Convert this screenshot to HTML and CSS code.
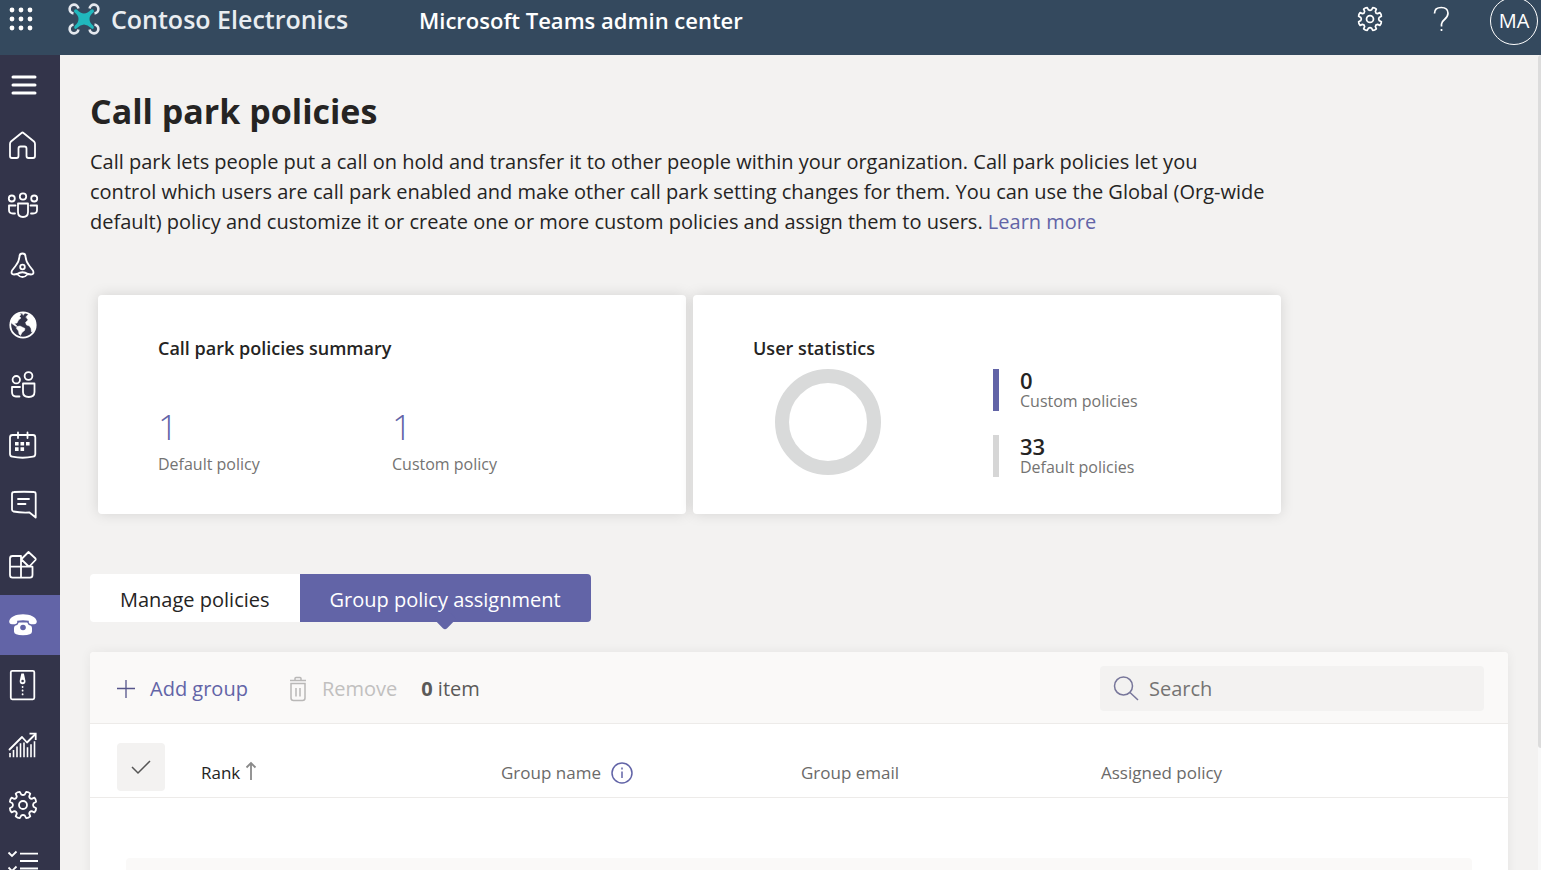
FILE: index.html
```html
<!DOCTYPE html>
<html lang="en">
<head>
<meta charset="utf-8">
<meta name="viewport" content="width=device-width, initial-scale=1">
<title>Call park policies - Microsoft Teams admin center</title>
<link rel="stylesheet" href="styles.css">
</head>
<body>
<svg class="defs" aria-hidden="true">
  <symbol id="gear" viewBox="-15 -15 30 30">
    <path d="M10.6 1.8 13.1 3.2Q13.2 5.4 11.4 7.3L8.7 6.2Q6.4 6.4 6.2 8.7L7.3 11.4Q5.4 13.2 3.2 13.1L1.8 10.6Q0 9.4-1.8 10.6L-3.2 13.1Q-5.4 13.2-7.3 11.4L-6.2 8.7Q-6.4 6.4-8.7 6.2L-11.4 7.3Q-13.2 5.4-13.1 3.2L-10.6 1.8Q-9.4 0-10.6-1.8L-13.1-3.2Q-13.2-5.4-11.4-7.3L-8.7-6.2Q-6.4-6.4-6.2-8.7L-7.3-11.4Q-5.4-13.2-3.2-13.1L-1.8-10.6Q0-9.4 1.8-10.6L3.2-13.1Q5.4-13.2 7.3-11.4L6.2-8.7Q6.4-6.4 8.7-6.2L11.4-7.3Q13.2-5.4 13.1-3.2L10.6-1.8Q9.4 0 10.6 1.8Z"/>
    <circle r="4"/>
  </symbol>
</svg>
<div class="app">
  <header class="topbar">
    <button class="launcher" aria-label="App launcher">
      <svg width="26" height="24" viewBox="-1 0 26 24" fill="#fff"><circle cx="3" cy="3" r="2.4"/><circle cx="12" cy="3" r="2.4"/><circle cx="21" cy="3" r="2.4"/><circle cx="3" cy="12" r="2.4"/><circle cx="12" cy="12" r="2.4"/><circle cx="21" cy="12" r="2.4"/><circle cx="3" cy="21" r="2.4"/><circle cx="12" cy="21" r="2.4"/><circle cx="21" cy="21" r="2.4"/></svg>
    </button>
    <a class="brand" href="#">
      <svg width="32" height="32" viewBox="0 0 32 32" fill="none">
        <path d="M5.5 10.4A4.4 4.4 0 1 1 10.4 5.5M21.6 5.5A4.4 4.4 0 1 1 26.500 10.4M26.500 21.6A4.4 4.4 0 1 1 21.6 26.500M10.4 26.500A4.4 4.4 0 1 1 5.5 21.6" stroke="#e4e8ee" stroke-width="2.6"/>
        <path d="M6 8Q6.500 5.500 8.800 6.500Q12.500 10.500 16 10.500Q19.500 10.500 23.200 6.500Q25.500 5.500 26 8Q26 9 25 9.800Q21.500 12.500 21.500 16Q21.500 19.500 25 22.500Q26.500 24 25.500 25.500Q24.500 26.500 23 25Q19.500 21.500 16 21.500Q12.500 21.500 9 25Q7.500 26.500 6.500 25.500Q5.500 24 7 22.500Q10.500 19.500 10.500 16Q10.500 12.500 7 9.800Q6 9 6 8Z" fill="#20b8bd"/>
      </svg>
      <span>Contoso Electronics</span>
    </a>
    <span class="product">Microsoft Teams admin center</span>
    <div class="top-actions">
      <button aria-label="Settings"><svg class="top-gear" width="26" height="26"><use href="#gear"/></svg></button>
      <button aria-label="Help"><svg width="17" height="26" viewBox="0 0 17 26" fill="none" stroke="#fff" stroke-width="1.7"><path d="M1.500 7.500Q1.500 1.500 8.300 1.500Q15 1.500 15 7.300Q15 10.500 11.500 13.500Q8.500 16 8.500 18V20.500M8.500 23V25"/></svg></button>
      <button class="avatar">MA</button>
    </div>
  </header>
  <div class="body">
    <nav class="rail" aria-label="Main">
      <a class="menu" href="#" aria-label="Menu"><svg viewBox="0 0 60 60"><path d="M13 22H35M13 30H35M13 38H35"/></svg></a>
      <a href="#" aria-label="Home"><svg viewBox="0 0 60 60"><path d="M21.500 18Q22.500 17 23.500 18L34 26.500Q35 27.500 35 29V41Q35 43 33 43H28.500Q26.500 43 26.500 41V33.500Q26.500 31.500 24.500 31.500H20.500Q18.500 31.500 18.500 33.500V41Q18.500 43 16.500 43H12Q10 43 10 41V29Q10 27.500 11 26.500Z"/></svg></a>
      <a href="#" aria-label="Teams"><svg viewBox="0 0 60 60"><circle cx="23" cy="21.500" r="3.200"/><circle cx="11.800" cy="23.500" r="3"/><circle cx="34.200" cy="23.500" r="3"/><path d="M18 28.500H28V37Q28 42 23 42Q18 42 18 37ZM15.500 30.500H9V35Q9 38.500 13 38.500H15M30.500 30.500H37V35Q37 38.500 33 38.500H31"/></svg></a>
      <a href="#" aria-label="Devices"><svg viewBox="0 0 60 60"><path d="M19.500 21.500Q19.500 18.500 22.500 18.500Q25.500 18.500 25.500 21.500Q26 27 29.500 31L33 35.500Q34.500 39.500 31 39.500L28 39Q22.500 35.500 17 39L14 39.500Q10.500 39.500 12 35.500L15.500 31Q19 27 19.500 21.500ZM17 39Q22.500 45 28 39"/><circle cx="22.500" cy="32" r="2.300"/></svg></a>
      <a href="#" aria-label="Locations"><svg viewBox="0 0 60 60"><circle cx="23" cy="30" r="12.700"/><path class="fill" d="M10.500 27L12 23 15 19.500 19 18 21 19.500 19.500 21.500 21 23 18.500 25 17 28 14.500 28.500 17 31 16 31.500 12.500 29ZM17 31.500L20 31 25 33.500 24.500 35.500 22 37.500 20.500 40.500 19 39 18.500 36 16.500 33.500ZM26 22L28.500 19 32 20.500 35 25.500 35.500 31 33.500 36.500 31.500 37 31 33.500 29.500 31 26.500 30 25.500 27.500 28 25ZM21.500 17.500H25L23.500 20Z"/></svg></a>
      <a href="#" aria-label="Users"><svg viewBox="0 0 60 60"><circle cx="28.500" cy="21" r="3.900"/><circle cx="16.300" cy="24.700" r="3.700"/><path d="M23 28.500H34.500V37Q34.500 42 28.800 42Q23 42 23 37ZM20 32H12V37Q12 41.500 16 41.500H19.500"/></svg></a>
      <a href="#" aria-label="Meetings"><svg viewBox="0 0 60 60"><path d="M12.500 20H33Q35.300 20 35.300 22.500V39Q35.300 41.300 33 41.700Q22.500 43.800 12.300 41.700Q10 41.300 10 39V22.500Q10 20 12.500 20ZM18 17.500V23M27.500 17.500V23"/><path class="block" d="M15 27h3.600v3.600H15zM20.500 27h3.600v3.600h-3.600zM26 27h3.600v3.600H26zM15 32.300h3.600v3.600H15zM20.500 32.300h3.600v3.600h-3.600z"/></svg></a>
      <a href="#" aria-label="Messaging policies"><svg viewBox="0 0 60 60"><path d="M14 17Q24 16.500 34 17Q35.700 17 35.700 19V42.500L29.500 37.500Q21 38 13.500 36.500Q12 36 12 34.500V19Q12 17 14 17ZM18 24H29M18 29H25.500"/></svg></a>
      <a href="#" aria-label="Teams apps"><svg viewBox="0 0 60 60"><path d="M21 21H12.500Q10 21 10 23.500V40Q10 42.600 12.500 42.600H30Q32.500 42.600 32.500 40V31.700H10M21 21V42.600M28.500 17L35.500 23.500Q36 24.300 35.500 25L29.800 31Q29 31.500 28.200 31L22 25Q21.500 24.300 22 23.500Z"/></svg></a>
      <a class="active" href="#" aria-label="Voice" aria-current="page"><svg viewBox="0 0 60 60"><path class="block" d="M23 19.200C30 19.200 36.500 22 36.800 26.500Q36.800 29 34 29.200Q29 29.500 28.800 27.500V25.800Q23 24.500 17.200 25.800V27.500Q17 29.500 12 29.200Q9.200 29 9.200 26.500C9.500 22 16 19.200 23 19.200Z"/><path class="block" d="M18.800 27.500H27.200Q28 30 30.500 30.500Q32 31 32 33V36.500Q32 40.300 23 40.300Q14 40.300 14 36.500V33Q14 31 15.500 30.500Q18 30 18.800 27.500Z"/><circle class="hole" cx="23" cy="32.500" r="2.800"/></svg></a>
      <a href="#" aria-label="Policy packages"><svg viewBox="0 0 60 60"><rect x="10.800" y="15.800" width="23.500" height="28.500" rx="1.500"/><path class="block" d="M21.300 18.500H23.900L25.500 26Q25.500 29.300 22.600 29.300Q19.700 29.300 19.700 26Z"/><circle class="dark" cx="22.600" cy="26" r="1.300"/><path d="M22.600 31.800V32M22.600 35.500V35.700M22.600 39.200V39.400"/></svg></a>
      <a href="#" aria-label="Analytics"><svg viewBox="0 0 60 60"><path d="M9.500 34.500L22 22 27 27.500 35 19.500"/><path class="sharp" d="M29.500 18.700H35.700V25"/><path class="sharp thin" d="M10 38V42.300M13.500 35V42.300M17 31.500V42.300M20.500 28.300V42.300M24 27.500V42.300M27.500 32.300V42.300M31 29.300V42.300M34.500 26.300V42.300"/></svg></a>
      <a href="#" aria-label="Org-wide settings"><svg viewBox="0 0 60 60"><use href="#gear" x="8" y="15" width="30" height="30"/></svg></a>
      <a href="#" aria-label="Planning"><svg viewBox="0 0 60 60"><path class="sharp" d="M20 18.700H38M20 26H38M20 33.500H38M8.500 17.500L12 21 16.500 16.500M8.500 32.500L12 36 16.500 31.500"/></svg></a>
    </nav>
    <main class="content">
      <h1>Call park policies</h1>
      <p class="intro">Call park lets people put a call on hold and transfer it to other people within your organization. Call park policies let you control which users are call park enabled and make other call park setting changes for them. You can use the Global (Org-wide default) policy and customize it or create one or more custom policies and assign them to users. <a href="#">Learn more</a></p>

      <div class="cards">
        <section class="card">
          <h2>Call park policies summary</h2>
          <div class="counts">
            <div><div class="big">1</div><div class="label">Default policy</div></div>
            <div><div class="big">1</div><div class="label">Custom policy</div></div>
          </div>
        </section>
        <section class="card">
          <h2>User statistics</h2>
          <div class="stats">
            <div class="donut"></div>
            <div class="legend">
              <div class="stat custom"><div class="num">0</div><div class="label">Custom policies</div></div>
              <div class="stat"><div class="num">33</div><div class="label">Default policies</div></div>
            </div>
          </div>
        </section>
      </div>

      <div class="tabs" role="tablist">
        <button class="tab" role="tab" aria-selected="false">Manage policies</button>
        <button class="tab selected" role="tab" aria-selected="true">Group policy assignment</button>
      </div>

      <section class="panel">
        <div class="toolbar">
          <button class="add"><svg width="18" height="18" viewBox="0 0 18 18" fill="none" stroke="#55548a" stroke-width="1.300"><path d="M0 8.500H18M9 0V18"/></svg>Add group</button>
          <button class="remove" disabled><svg width="18" height="26" viewBox="0 0 18 26" fill="none" stroke="#b9b8b7" stroke-width="1.500"><path d="M1 4.500H17M6 4V2.500Q6 1.500 7 1.500H11Q12 1.500 12 2.500V4M2 7.500H16V22Q16 24.500 13.500 24.500H4.500Q2 24.500 2 22ZM7 12V20.500M11 12V20.500"/></svg>Remove</button>
          <span class="items"><b>0</b> item</span>
          <label class="search">
            <svg width="26" height="26" viewBox="0 0 26 26" fill="none" stroke="#77769a" stroke-width="1.500"><circle cx="10.500" cy="10" r="9"/><path d="M17 16.500L25 24"/></svg>
            <input type="text" placeholder="Search" aria-label="Search">
          </label>
        </div>
        <table>
          <thead>
            <tr>
              <th class="pick"><button aria-label="Select all"><svg width="20" height="16" viewBox="0 0 20 16" fill="none" stroke="#555" stroke-width="1.500"><path d="M1 8L7 14 19 2"/></svg></button></th>
              <th class="rank">Rank <svg class="sort" width="12" height="20" viewBox="-1 0 12 20" fill="none" stroke="#8a8a8a" stroke-width="1.800"><path d="M5 19V2M0.500 6.500L5 2 9.500 6.500"/></svg></th>
              <th>Group name <svg class="info" width="22" height="22" viewBox="0 0 22 22" fill="none" stroke="#6264a7" stroke-width="1.500"><circle cx="11" cy="11" r="10"/><path d="M11 9.500V16M11 5.500V7.500"/></svg></th>
              <th>Group email</th>
              <th>Assigned policy</th>
            </tr>
          </thead>
        </table>
        <div class="empty"></div>
      </section>
    </main>
    <div class="scroll"><div class="thumb"></div></div>
  </div>
</div>
</body>
</html>
```
FILE: styles.css
```css
* { box-sizing: border-box; }
body {
  margin: 0;
  background: #f3f2f1;
  color: #252423;
  font-family: "Open Sans", "Noto Sans", sans-serif;
}
button, input { font: inherit; color: inherit; border: 0; background: none; padding: 0; }
h1, h2, p { margin: 0; }
a { color: #6264a7; text-decoration: none; }
svg { display: block; flex: none; }
.defs { position: absolute; width: 0; height: 0; }

.app { height: 100vh; display: flex; flex-direction: column; overflow: hidden; }

.topbar {
  height: 55px;
  flex: none;
  display: flex;
  align-items: center;
  padding: 0 3px 14px 8px;
  background: #34495e;
  color: #fff;
  overflow: hidden;
}
.launcher { width: 60px; padding-bottom: 3px; }
.brand { display: flex; align-items: center; gap: 11px; width: 351px; padding-bottom: 3px; color: #e9edf1; font-size: 25px; font-weight: 600; }
.product { padding-bottom: 2px; font-size: 22px; font-weight: 600; }
.top-actions { margin-left: auto; display: flex; align-items: center; }
.top-actions button { margin-right: 50px; padding-bottom: 3px; }
.top-actions .avatar {
  width: 48px;
  height: 48px;
  margin: 0 0 0 -10px;
  padding: 0;
  border: 1px solid #fff;
  border-radius: 50%;
  font-size: 20px;
}
.top-gear { fill: none; stroke: #fff; stroke-width: 2; stroke-linejoin: round; }

.body { flex: 1; min-height: 0; display: flex; }
.rail { width: 60px; flex: none; background: #33344a; overflow: hidden; }
.rail a { display: block; height: 60px; }
.rail .active { background: #6264a7; }
.rail svg {
  width: 60px;
  height: 60px;
  fill: none;
  stroke: #fff;
  stroke-width: 1.8;
  stroke-linecap: round;
  stroke-linejoin: round;
}
.rail .menu path { stroke-width: 3; }
.rail .fill { fill: #fff; stroke-width: 0.5; }
.rail .block { fill: #fff; stroke: none; }
.rail .hole { fill: #6264a7; stroke: none; }
.rail .dark { fill: #33344a; stroke: none; }
.rail .sharp { stroke-linecap: butt; stroke-linejoin: miter; }
.rail .thin { stroke-width: 1.6; }

.content { flex: 1; min-width: 0; padding: 30px 30px 0; overflow: hidden; }
h1 { font-size: 34px; line-height: 52px; font-weight: 700; }
.intro { max-width: 1177px; margin-top: 10px; font-size: 20px; line-height: 30px; }

.cards { display: flex; gap: 7px; margin: 58px 0 60px; padding-left: 8px; }
.card {
  width: 588px;
  height: 219px;
  padding: 40px 60px 0;
  background: #fff;
  border-radius: 4px;
  box-shadow: 0 0 14px rgba(0, 0, 0, 0.13);
}
h2 { font-size: 18px; line-height: 26px; font-weight: 600; }
.counts { display: grid; grid-template-columns: 1fr 1fr; margin-top: 41px; }
.big { font-size: 35px; line-height: 50px; font-weight: 300; color: #6264a7; }
.label { font-size: 16px; line-height: 24px; color: #747372; }
.stats { display: flex; align-items: flex-start; padding: 8px 0 0 22px; }
.donut { width: 106px; height: 106px; border: 14px solid #d9dada; border-radius: 50%; }
.legend { display: grid; gap: 24px; margin-left: 112px; }
.stat { height: 42px; padding-left: 21px; border-left: 6px solid #d6d6d6; }
.stat.custom { border-color: #6264a7; }
.num { font-size: 22px; line-height: 22px; font-weight: 600; }
.stat .label { line-height: 20px; }

.tabs { display: flex; }
.tab { height: 48px; padding: 2px 30px 0; background: #fff; font-size: 20px; border-radius: 4px 0 0 4px; }
.tab.selected { position: relative; background: #6264a7; color: #fff; border-radius: 0 4px 4px 0; }
.tab.selected::after {
  content: "";
  position: absolute;
  left: 50%;
  bottom: -5px;
  width: 16px;
  height: 16px;
  margin-left: -8px;
  border-radius: 3px;
  background: #6264a7;
  transform: rotate(45deg);
}

.panel {
  height: 400px;
  margin-top: 30px;
  background: #fff;
  border-radius: 4px;
  box-shadow: 0 0 12px rgba(0, 0, 0, 0.06);
}
.toolbar {
  display: flex;
  align-items: center;
  height: 72px;
  padding: 2px 24px 0 27px;
  background: #faf9f8;
  border-bottom: 1px solid #edebe9;
  border-radius: 4px 4px 0 0;
  font-size: 20px;
}
.add, .remove { display: flex; align-items: center; gap: 15px; }
.add { color: #6264a7; }
.remove { margin: 0 24px 0 41px; color: #c1c0bf; }
.items { color: #5b5a59; }
.search {
  display: flex;
  align-items: center;
  gap: 10px;
  width: 384px;
  height: 45px;
  margin-left: auto;
  padding: 0 13px;
  background: #f3f2f1;
  border-radius: 4px;
}
.search input { flex: 1; min-width: 0; outline: 0; }
.search input::placeholder { color: #757473; opacity: 1; }

table { width: 100%; table-layout: fixed; border-collapse: collapse; }
th {
  height: 73px;
  padding: 24px 0 0;
  border-bottom: 1px solid #edebe9;
  text-align: left;
  font-size: 17px;
  font-weight: 400;
  color: #6b6a69;
}
th svg { display: inline-block; }
.pick { width: 111px; padding: 13px 0 0 27px; }
.pick button { display: flex; align-items: center; justify-content: center; width: 48px; height: 48px; background: #f3f2f1; border-radius: 4px; }
th:nth-child(n+2):nth-child(-n+4) { width: 300px; }
.rank { color: #252423; }
.sort { vertical-align: -2px; }
.info { margin-left: 6px; vertical-align: -5px; }
.empty { height: 200px; margin: 60px 36px 0; background: #faf9f8; border-radius: 4px; }

.scroll { width: 3px; flex: none; background: #f8f8f8; }
.thumb { height: 85%; background: #dcdcdc; border-radius: 3px 0 0 3px; }
```
